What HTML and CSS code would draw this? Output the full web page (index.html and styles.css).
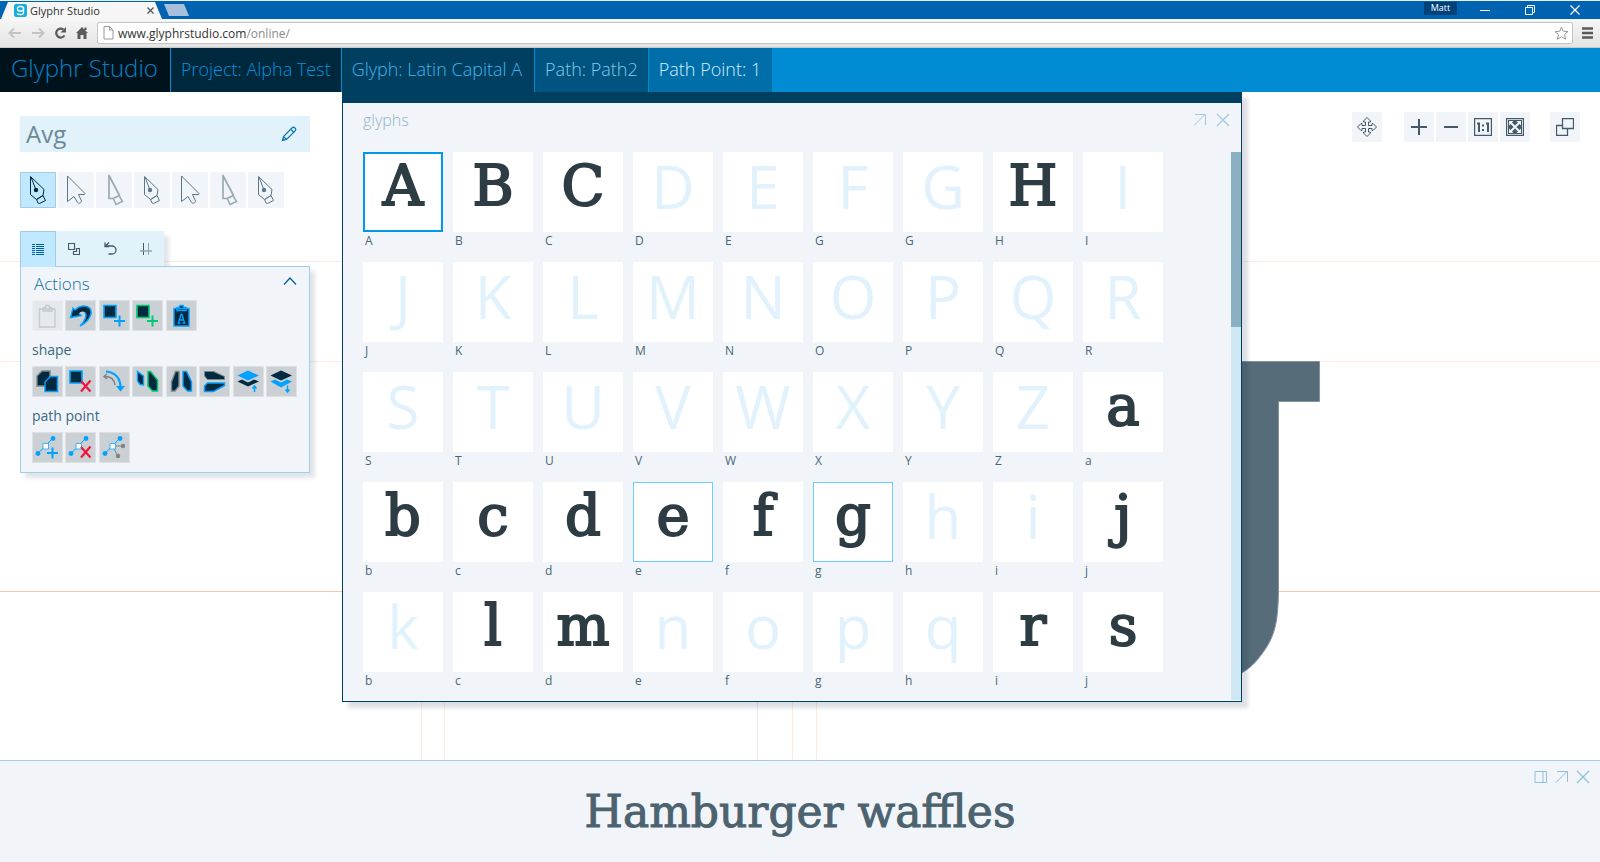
FILE: index.html
```html
<!DOCTYPE html>
<html lang="en">
<head>
<meta charset="utf-8">
<title>Glyphr Studio</title>
<link rel="stylesheet" href="styles.css">
</head>
<body>
<svg class="defs" aria-hidden="true">
  <symbol id="pen" viewBox="0 0 36 36"><path d="M10.500 4.500 24 17.500 23 23.500 16.500 27.500 10.500 22.500Z" fill="none" stroke="currentColor"/><path d="M16.500 27.500 23 23.500 25.500 28.500 19.500 31.500 18 31ZM11 5 16 18" fill="none" stroke="currentColor"/><circle cx="16" cy="18" r="2.200" fill="currentColor"/></symbol>
  <symbol id="arrow" viewBox="0 0 36 36"><path d="M9.500 4 27 21.500 26.500 22.500H20.500L23.500 29C23.500 31 20.500 32 19.500 30.500L16 24.500 9.500 29.500Z" fill="none" stroke="currentColor"/></symbol>
  <symbol id="knife" viewBox="0 0 36 36"><path d="M13 3.500V26.500H17L23.500 23.500Z" fill="none" stroke="currentColor" stroke-width="1.700" stroke-linejoin="round"/><path d="M17.500 27 20 32.500 26.500 29.500 23.500 24.500" fill="none" stroke="currentColor" stroke-width="1.500"/></symbol>
  <symbol id="popout" viewBox="0 0 14 14"><path d="M1 12.500 12 1.500M2 1.500H12.500V12" fill="none" stroke="currentColor"/></symbol>
  <symbol id="close" viewBox="0 0 14 14"><path d="M1 1 13 13M13 1 1 13" fill="none" stroke="currentColor" stroke-width="1.200"/></symbol>
</svg>

<header class="browser">
  <div class="titlebar">
    <div class="browser-tab">
      <svg width="13" height="13" viewBox="0 0 13 13"><rect width="13" height="13" rx="2" fill="#16aedd"/><rect x="3.500" y="2.500" width="6" height="4.500" rx="2" fill="none" stroke="#fff" stroke-width="1.300"/><path d="M9.500 3V9Q9.500 10.500 7.500 10.500H5Q3.500 10.500 3.500 9" fill="none" stroke="#fff" stroke-width="1.300"/></svg>
      <span>Glyphr Studio</span>
      <button class="tab-close" aria-label="Close tab"><svg width="7" height="7" viewBox="0 0 7 7"><path d="M.5.5 6.500 6.500M6.500.5.5 6.500" stroke="#555" stroke-width="1.300"/></svg></button>
    </div>
    <button class="new-tab" aria-label="New tab"></button>
    <div class="window-controls">
      <span class="user">Matt</span>
      <button aria-label="Minimize"><svg width="10" height="10"><path d="M0 5.500H10" stroke="#fff"/></svg></button>
      <button aria-label="Restore"><svg width="10" height="10"><path d="M.5 2.500H7.500V9.500H.5ZM2.500 2.500V.5H9.500V7.500H7.500" fill="none" stroke="#fff"/></svg></button>
      <button aria-label="Close"><svg width="10" height="10"><path d="M.5.5 9.500 9.500M9.500.5.5 9.500" stroke="#fff" stroke-width="1.200"/></svg></button>
    </div>
  </div>
  <div class="toolbar">
    <button class="nav off" aria-label="Back"><svg width="14" height="12"><path d="M1.500 6H13M6 1.500 1.500 6 6 10.500" fill="none" stroke="currentColor" stroke-width="2"/></svg></button>
    <button class="nav off" aria-label="Forward"><svg width="14" height="12"><path d="M1 6H12.500M8 1.500 12.500 6 8 10.500" fill="none" stroke="currentColor" stroke-width="2"/></svg></button>
    <button class="nav" aria-label="Reload"><svg width="13" height="12"><path d="M10.500 8.500A4.500 4.500 0 1 1 9.500 2.500" fill="none" stroke="currentColor" stroke-width="2.200"/><path d="M12 0V5.500H6.500Z" fill="currentColor"/></svg></button>
    <button class="nav" aria-label="Home"><svg width="12" height="12"><path d="M6 0 12 6H10.500V12H7.500V8H4.500V12H1.500V6H0ZM8.500.5H10.500V3H8.500Z" fill="currentColor"/></svg></button>
    <div class="address"><svg width="11" height="14"><path d="M1 .5H6.500L10 4V13H1ZM6.500.5V4H10" fill="#fff" stroke="#999"/></svg><span>www.glyphrstudio.com<i>/online/</i></span>
      <svg class="star" width="15" height="14" viewBox="0 0 15 14"><path d="M7.500 1 9.300 5.200 14 5.600 10.500 8.600 11.600 13.200 7.500 10.800 3.400 13.200 4.500 8.600 1 5.600 5.700 5.200Z" fill="#fff" stroke="#999"/></svg></div>
    <button class="menu" aria-label="Menu"><svg width="11" height="12"><path d="M0 1.500H11M0 6H11M0 10.500H11" stroke="#5a5a5a" stroke-width="2.400"/></svg></button>
  </div>
</header>

<nav class="crumbs">
  <a class="crumb brand" href="#">Glyphr Studio</a>
  <a class="crumb project" href="#">Project: Alpha Test</a>
  <a class="crumb glyph" href="#">Glyph: Latin Capital A</a>
  <a class="crumb path" href="#">Path: Path2</a>
  <a class="crumb point" href="#">Path Point: 1</a>
</nav>

<main class="workspace">
  <svg class="canvas" aria-hidden="true">
    <path d="M0 169.500H4000M0 269.500H4000" stroke="#fdebe3"/>
    <path d="M421.500 0V2000M444.500 0V2000M792.500 0V2000M816.500 0V2000" stroke="#fdeae2"/>
    <path d="M757.500 0V2000" stroke="#f0e2fa"/>
    <path d="M0 499.500H4000" stroke="#f5c5ae"/>
    <path d="M1000 269.500H1319.500V309.500H1278.500V498C1278 535 1274 547 1258 567C1249 578 1240 584 1200 600H1000Z" fill="#566c78" stroke="#8493a2"/>
  </svg>

  <aside class="sidebar">
    <div class="name-field">
      <input type="text" value="Avg" aria-label="Name">
      <svg width="16" height="16" viewBox="0 0 16 16"><path d="M1.500 14.500 2.500 10.500 11 2Q12.500.5 14 2T14 5L5.500 13.500ZM10 3.500 12.500 6M2.500 10.500 5.500 13.500" fill="none" stroke="#1279b0" stroke-width="1.200"/><path d="M1 15 2 12 4 14Z" fill="#1279b0"/></svg>
    </div>
    <div class="tools">
      <button class="tool on" aria-label="Pen"><svg><use href="#pen"/></svg></button>
      <button class="tool" aria-label="Select"><svg><use href="#arrow"/></svg></button>
      <button class="tool gray" aria-label="Knife"><svg><use href="#knife"/></svg></button>
      <button class="tool" aria-label="Add point"><svg><use href="#pen"/></svg></button>
      <button class="tool" aria-label="Move"><svg><use href="#arrow"/></svg></button>
      <button class="tool gray" aria-label="Slice"><svg><use href="#knife"/></svg></button>
      <button class="tool" aria-label="Edit point"><svg><use href="#pen"/></svg></button>
    </div>
    <div class="tabs">
      <button class="tab on" aria-label="Attributes"><svg width="12" height="12"><path d="M0 .5H3M4 .5H12M0 2.500H3M4 2.500H12M0 4.500H3M4 4.500H12M0 6.500H3M4 6.500H12M0 8.500H3M4 8.500H12M0 10.500H3M4 10.500H12" stroke="#00629c"/></svg></button>
      <button class="tab" aria-label="Shapes"><svg width="12" height="12"><path d="M.5.5H6.500V6.500H.5ZM8.500 5.500H11.500V11.500H5.500V8.500H8.500Z" fill="none" stroke="#455a68" stroke-width="1.200"/></svg></button>
      <button class="tab" aria-label="History"><svg width="13" height="13"><path d="M1.500 4H8A4 4 0 0 1 8 12H4.500M1 .5V4.500H5M5 .500 1 4.500" fill="none" stroke="#455a68" stroke-width="1.300"/></svg></button>
      <button class="tab" aria-label="Guides"><svg width="12" height="12"><path d="M3.500 0V12" stroke="#455a68"/><path d="M8.500 0V12" stroke="#8fa3b0"/><path d="M0 8H12" stroke="#8fa3b0" stroke-width="1.500"/></svg></button>
    </div>
    <section class="panel">
      <div class="panel-head"><h2>Actions</h2><button aria-label="Collapse"><svg width="14" height="8"><path d="M1 7.500 7 1 13 7.500" fill="none" stroke="#00629c" stroke-width="1.300"/></svg></button></div>
      <div class="actions">
        <button class="act off" aria-label="Paste"><svg><path d="M7.500 9H23V27H7.500ZM11 11V8L13.500 7.500 14 5.500H17L17.500 7.500 20 8V11Z" fill="none" stroke="#c3c9cd" stroke-width="1.300"/></svg></button>
        <button class="act" aria-label="Undo"><svg><path d="M5.500 17.500 8 8 10 10C15 5 22 5 25 8.500C28.500 14 23 22 15 26C21 20 22 15 20 12.500C18 10.500 15 12 14 13.500L16 15.500Z" fill="#002a40"/><path d="M15 26C23 22 28.500 14 25 8.500C22 5 15 5 10 10L8 8 5.500 17.500 16 15.500 14 13.500M15 26C21 20 22 15 20 12.500" fill="none" stroke="#00a2ff" stroke-width="1.400"/></svg></button>
        <button class="act" aria-label="Add shape"><svg><path d="M5 5.500H17V17.500H5Z" fill="#002a40" stroke="#00a2ff" stroke-width="1.600"/><path d="M20.500 15.500V26.500M15 21H26" stroke="#00a2ff" stroke-width="2"/></svg></button>
        <button class="act" aria-label="Add component"><svg><path d="M5 5.500H17V17.500H5Z" fill="#002a40" stroke="#00c96f" stroke-width="1.600"/><path d="M20.500 15.500V26.500M15 21H26" stroke="#00c96f" stroke-width="2"/></svg></button>
        <button class="act" aria-label="Paste glyph"><svg><path d="M8 8.500H23V26H8ZM11 10.500V7.500L13.500 7 14 5.500H17L17.500 7 20 7.500V10.500Z" fill="#002a40" stroke="#00a2ff" stroke-width="1.400"/><path d="M11.500 23H14.500M16.500 23H19.500M12.500 23 15 14.500H16L18.500 23M14 20H17" fill="none" stroke="#00a2ff" stroke-width="1.300"/></svg></button>
      </div>
      <h3>shape</h3>
      <div class="actions">
        <button class="act" aria-label="Combine"><svg><path d="M5 20V10L10 5H18V20Z" fill="#002a40" stroke="#7d8589" stroke-width="1.400"/><path d="M13 25.500V16L18.500 10.500H25.500V25.500Z" fill="#002a40" stroke="#00a2ff" stroke-width="1.400"/></svg></button>
        <button class="act" aria-label="Delete shape"><svg><path d="M5 5H17V17H5Z" fill="#002a40" stroke="#00a2ff" stroke-width="1.600"/><path d="M16 15 25.500 25.500M25.500 14.500 16 25.500" stroke="#f0153c" stroke-width="2.200"/></svg></button>
        <button class="act" aria-label="Reverse path"><svg><path d="M7 5.500Q21 7 21.500 21" fill="none" stroke="#00a2ff" stroke-width="2.200"/><path d="M17 20H26L21.500 25.500Z" fill="#00a2ff"/><path d="M16 19Q15 10.500 6 10.500M8 8 5 10.500 8 13" fill="none" stroke="#7d8589" stroke-width="1.500"/></svg></button>
        <button class="act" aria-label="Copy flip"><svg><path d="M5.500 5.500 11.500 10V19L8 18.500 5.500 15Z" fill="#002a40" stroke="#00a2ff" stroke-width="1.400"/><path d="M16 5.500H18.500L25.500 14V25H20.500L16 20Z" fill="#002a40" stroke="#00c96f" stroke-width="1.500"/></svg></button>
        <button class="act" aria-label="Flip horizontal"><svg><path d="M13 5.500H9.500L5.500 16V25H9L13 20Z" fill="#002a40" stroke="#7d8589" stroke-width="1.400"/><path d="M17 5.500H20.500L25.500 16V25H21.500L17 20Z" fill="#002a40" stroke="#00a2ff" stroke-width="1.400"/></svg></button>
        <button class="act" aria-label="Flip vertical"><svg><path d="M5.500 5.500H14.500L25.500 10.500V13.500H8.500L5.500 10Z" fill="#002a40" stroke="#7d8589"/><path d="M5.500 20 8.500 17H25.500V19.500L14.500 25.500H5.500Z" fill="#002a40" stroke="#00a2ff" stroke-width="1.500"/></svg></button>
        <button class="act" aria-label="Move up"><svg><path d="M4.500 9.500 15 4.500 26 9.500 15 14.500Z" fill="#00a2ff"/><path d="M4.500 15.500 9 13.500 15 16.500 21 13.500 26 15.500 15 20.500Z" fill="#002a40"/><path d="M21.500 26V20.500M19.500 22.500 21.500 20 23.500 22.500" fill="none" stroke="#00a2ff" stroke-width="1.500"/></svg></button>
        <button class="act" aria-label="Move down"><svg><path d="M4.500 9.500 15 4.500 26 9.500 15 14.500Z" fill="#002a40"/><path d="M4.500 15.500 9 13.500 15 16.500 21 13.500 26 15.500 15 21.500Z" fill="#00a2ff"/><path d="M21.500 19.500V25.500M19.500 23.500 21.500 26 23.500 23.500" fill="none" stroke="#00a2ff" stroke-width="1.500"/></svg></button>
      </div>
      <h3>path point</h3>
      <div class="actions">
        <button class="act" aria-label="Insert point"><svg><path d="M6 21.500 20.500 6.500" stroke="#00a2ff"/><circle cx="6" cy="21.500" r="2.400" fill="#00a2ff"/><circle cx="21" cy="6.500" r="2.400" fill="#00a2ff"/><path d="M11 11.500H16.500V17H11Z" fill="#fff" stroke="#39b4ff"/><path d="M20.500 15.500V26.500M15 21H26" stroke="#00a2ff" stroke-width="2"/></svg></button>
        <button class="act" aria-label="Delete point"><svg><path d="M6 21.500 20.500 6.500" stroke="#00a2ff"/><circle cx="6" cy="21.500" r="2.400" fill="#00a2ff"/><circle cx="21" cy="6.500" r="2.400" fill="#00a2ff"/><path d="M11 11.500H16.500V17H11Z" fill="#fff" stroke="#39b4ff"/><path d="M16 15 25.500 25.500M25.500 14.500 16 25.500" stroke="#f0153c" stroke-width="2.200"/></svg></button>
        <button class="act" aria-label="Reset handles"><svg><path d="M24 14H14L18.500 24" fill="none" stroke="#7d8589"/><circle cx="24" cy="14" r="2.200" fill="#7d8589"/><circle cx="19" cy="24" r="2.200" fill="#7d8589"/><path d="M6 21.500 20.500 6.500" stroke="#00a2ff"/><circle cx="6" cy="21.500" r="2.400" fill="#00a2ff"/><circle cx="21" cy="6.500" r="2.400" fill="#00a2ff"/><path d="M11 11.500H16.500V17H11Z" fill="#fff" stroke="#39b4ff"/></svg></button>
      </div>
    </section>
  </aside>

  <section class="chooser">
    <div class="chooser-head">
      <h2>glyphs</h2>
      <button aria-label="Pop out"><svg width="14" height="14"><use href="#popout"/></svg></button>
      <button aria-label="Close"><svg width="14" height="14"><use href="#close"/></svg></button>
    </div>
    <div class="chooser-body">
      <div class="glyph-grid">
        <button class="cell selected"><b>A</b><span>A</span></button>
        <button class="cell"><b>B</b><span>B</span></button>
        <button class="cell"><b>C</b><span>C</span></button>
        <button class="cell empty"><b>D</b><span>D</span></button>
        <button class="cell empty"><b>E</b><span>E</span></button>
        <button class="cell empty"><b>F</b><span>G</span></button>
        <button class="cell empty"><b>G</b><span>G</span></button>
        <button class="cell"><b>H</b><span>H</span></button>
        <button class="cell empty"><b>I</b><span>I</span></button>
        <button class="cell empty"><b>J</b><span>J</span></button>
        <button class="cell empty"><b>K</b><span>K</span></button>
        <button class="cell empty"><b>L</b><span>L</span></button>
        <button class="cell empty"><b>M</b><span>M</span></button>
        <button class="cell empty"><b>N</b><span>N</span></button>
        <button class="cell empty"><b>O</b><span>O</span></button>
        <button class="cell empty"><b>P</b><span>P</span></button>
        <button class="cell empty"><b>Q</b><span>Q</span></button>
        <button class="cell empty"><b>R</b><span>R</span></button>
        <button class="cell empty"><b>S</b><span>S</span></button>
        <button class="cell empty"><b>T</b><span>T</span></button>
        <button class="cell empty"><b>U</b><span>U</span></button>
        <button class="cell empty"><b>V</b><span>V</span></button>
        <button class="cell empty"><b>W</b><span>W</span></button>
        <button class="cell empty"><b>X</b><span>X</span></button>
        <button class="cell empty"><b>Y</b><span>Y</span></button>
        <button class="cell empty"><b>Z</b><span>Z</span></button>
        <button class="cell"><b>a</b><span>a</span></button>
        <button class="cell"><b>b</b><span>b</span></button>
        <button class="cell"><b>c</b><span>c</span></button>
        <button class="cell"><b>d</b><span>d</span></button>
        <button class="cell linked"><b>e</b><span>e</span></button>
        <button class="cell"><b>f</b><span>f</span></button>
        <button class="cell linked"><b>g</b><span>g</span></button>
        <button class="cell empty"><b>h</b><span>h</span></button>
        <button class="cell empty"><b>i</b><span>i</span></button>
        <button class="cell"><b>j</b><span>j</span></button>
        <button class="cell empty"><b>k</b><span>b</span></button>
        <button class="cell"><b>l</b><span>c</span></button>
        <button class="cell"><b>m</b><span>d</span></button>
        <button class="cell empty"><b>n</b><span>e</span></button>
        <button class="cell empty"><b>o</b><span>f</span></button>
        <button class="cell empty"><b>p</b><span>g</span></button>
        <button class="cell empty"><b>q</b><span>h</span></button>
        <button class="cell"><b>r</b><span>i</span></button>
        <button class="cell"><b>s</b><span>j</span></button>
      </div>
      <div class="track"><div class="thumb"></div></div>
    </div>
  </section>

  <div class="view-tools">
    <button class="view pan" aria-label="Pan"><svg width="20" height="20"><path d="M10 .5 13.500 4V5H11.500V8.500H15V6.500H16L19.500 10 16 13.500H15V11.500H11.500V15H13.500V16L10 19.500 6.500 16V15H8.500V11.500H5V13.500H4L.5 10 4 6.500H5V8.500H8.500V5H6.500V4Z" fill="none" stroke="currentColor"/></svg></button>
    <button class="view" aria-label="Zoom in"><svg width="16" height="16"><path d="M8 0V16M0 8H16" stroke="currentColor" stroke-width="2"/></svg></button>
    <button class="view" aria-label="Zoom out"><svg width="16" height="16"><path d="M1 8H15" stroke="currentColor" stroke-width="2"/></svg></button>
    <button class="view" aria-label="Actual size"><svg width="18" height="18"><path d="M.5.500H17.500V17.500H.5Z" fill="none" stroke="currentColor" stroke-width="1.400"/><path d="M5 14V4.500M3 5.500H5M14 14V4.500M12 5.500H14M9 6.500V8.500M9 11V13" stroke="currentColor" stroke-width="2"/></svg></button>
    <button class="view" aria-label="Fit"><svg width="18" height="18"><path d="M.5.500H17.500V17.500H.5Z" fill="none" stroke="currentColor" stroke-width="1.400"/><path d="M2 2H16V16H2Z" fill="currentColor"/><path d="M4.500 4.500 13.500 13.500M13.500 4.500 4.500 13.500" stroke="#f1f5f9" stroke-width="2"/><path d="M3 3H7.500L3 7.500ZM15 3V7.500L10.500 3ZM3 15V10.500L7.500 15ZM15 15H10.500L15 10.500Z" fill="#f1f5f9"/></svg></button>
    <button class="view layers" aria-label="Layers"><svg width="18" height="18"><path d="M6.500.500H17.500V10.500H6.500Z M6.500 7.500H.5V17.500H11.500V10.500" fill="none" stroke="currentColor" stroke-width="1.300"/></svg></button>
  </div>
</main>

<footer class="preview">
  <p>Hamburger waffles</p>
  <div class="preview-tools">
    <button aria-label="Dock"><svg width="14" height="14"><path d="M1 1.500H12.500V12.500H1ZM9 1.500V12.500" fill="none" stroke="currentColor"/></svg></button>
    <button aria-label="Pop out"><svg width="14" height="14"><use href="#popout"/></svg></button>
    <button aria-label="Close"><svg width="14" height="14"><use href="#close"/></svg></button>
  </div>
</footer>
</body>
</html>
```

FILE: styles.css
```css
* { box-sizing: border-box; }

body {
  margin: 0;
  min-height: 100vh;
  display: flex;
  flex-direction: column;
  font-family: "Open Sans", "Noto Sans", sans-serif;
  background: #fff;
}

button {
  margin: 0;
  padding: 0;
  border: 0;
  background: none;
  color: inherit;
  font: inherit;
}

svg { display: block; }
h2, h3, p { margin: 0; font-weight: 300; }
.defs { position: absolute; width: 0; height: 0; }

/* Browser frame */
.browser { background: #0063b1; padding-top: 1px; border-top: 1px solid #e8eef4; }
.titlebar { display: flex; align-items: stretch; height: 17px; }
.browser-tab {
  display: flex;
  align-items: center;
  gap: 3px;
  width: 162px;
  padding: 0 8px 0 14px;
  background: #f6f6f6;
  clip-path: polygon(8px 0, 155px 0, 100% 100%, 1px 100%);
  font-size: 11px;
  color: #333;
}
.tab-close { margin: 0 0 0 auto; }
.browser-tab span { flex: 1; }
.new-tab {
  width: 25px;
  height: 12px;
  margin: 2px 0 0 2px;
  background: #a7bfdb;
  clip-path: polygon(0 0, 20px 0, 100% 100%, 5px 100%);
}
.window-controls { display: flex; align-items: flex-start; margin-left: auto; padding-right: 20px; }
.window-controls button { padding-top: 3px; margin-left: 35px; }
.window-controls .user + button { margin-left: 23px; }
.user {
  width: 33px;
  height: 13px;
  background: #00417a;
  color: #fff;
  font-size: 9px;
  line-height: 12px;
  text-align: center;
}
.toolbar {
  display: flex;
  align-items: center;
  gap: 9px;
  height: 29px;
  padding: 0 7px 0 8px;
  background: linear-gradient(#f6f6f6, #e4e4e4);
  border-bottom: 1px solid #c8c8c8;
}
.nav { color: #5a5a5a; }
.nav.off { color: #c4c4c4; }
.address {
  flex: 1;
  display: flex;
  align-items: center;
  gap: 4px;
  height: 22px;
  padding: 0 3px 0 5px;
  border: 1px solid #c4c4c4;
  border-radius: 2px;
  background: #fff;
  font-size: 12px;
  color: #333;
}
.address i { font-style: normal; color: #8a8a8a; }
.star { margin-left: auto; }

/* Navigation */
.crumbs { display: flex; height: 44px; background: #008bd3; }
.crumb {
  padding: 0 10px;
  margin-right: 1px;
  font-size: 18px;
  font-weight: 300;
  line-height: 43px;
  text-decoration: none;
  white-space: nowrap;
}
.brand { padding: 0 12px 0 11px; font-size: 24px; line-height: 40px; background: #00131c; color: #0082c8; }
.project { background: #00283d; color: #0093de; }
.glyph { padding-right: 12px; background: #003f60; color: #41b5f0; }
.path { background: #00547f; color: #86c8ee; }
.point { margin: 0; padding-right: 11px; background: #006ea9; color: #d5eefc; }

/* Workspace */
.workspace { position: relative; flex: 1; display: flex; align-items: flex-start; }
.canvas { position: absolute; inset: 0; width: 100%; height: 100%; }
.sidebar { position: relative; flex: none; width: 342px; padding: 24px 32px 0 20px; }
.name-field {
  display: flex;
  align-items: center;
  height: 36px;
  padding: 0 13px 0 6px;
  background: #e1f2fb;
}
.name-field input {
  flex: 1;
  min-width: 0;
  padding: 0;
  border: 0;
  outline: 0;
  background: none;
  color: #6c8997;
  font: 400 24px/36px "Open Sans", "Noto Sans", sans-serif;
}
.tools { display: flex; gap: 2px; margin-top: 20px; }
.tool { width: 36px; height: 36px; background: #f1f5f9; color: #5b788a; }
.tool svg { width: 36px; height: 36px; }
.tool.gray { color: #9aaab3; }
.tool.on { background: #c0e8fe; color: #00283d; box-shadow: inset 0 0 0 1px #a3cde0; }
.tabs {
  display: flex;
  width: 144px;
  height: 35px;
  margin-top: 23px;
  background: #e1f2fb;
  box-shadow: 5px 5px 4px #0025401f;
}
.tab { display: grid; place-items: center; width: 36px; }
.tab.on { position: relative; height: 36px; background: #c0e8fe; border: 1px solid #a3cde0; border-bottom: 0; z-index: 1; }
.panel {
  position: relative;
  padding: 0 12px 9px 11px;
  border: 1px solid #a3cde0;
  background: #f1f5f9;
  box-shadow: 5px 5px 4px #0025401f;
}
.panel-head { display: flex; justify-content: space-between; align-items: flex-start; height: 33px; padding-left: 2px; }
.panel h2 { font-size: 17px; line-height: 34px; color: #1271a3; }
.panel-head button { padding: 10px 0 0; }
.panel h3 { padding-top: 3px; font-size: 14px; line-height: 32px; font-weight: 400; color: #3c6880; }
.actions { display: grid; grid-template-columns: repeat(8, 31px); justify-content: space-between; }
.act { width: 31px; height: 31px; background: #cbd0d4; border: 1px solid #dde1e4; }
.act svg { width: 31px; height: 31px; margin: -1px; }
.act.off { background: #e5e9ec; border-color: #eceff2; }

/* Glyph chooser */
.chooser {
  position: relative;
  flex: 1;
  min-width: 0;
  border: 1px solid #003f60;
  border-top-width: 11px;
  background: #f1f5f9;
  box-shadow: 6px 6px 4px #00254024;
}
.chooser-head {
  display: flex;
  align-items: center;
  gap: 9px;
  height: 49px;
  padding: 0 11px 16px 20px;
  color: #9dcae0;
}
.chooser-head h2 { margin-right: auto; font-size: 16px; line-height: 32px; color: #8fb5c9; }
.chooser-body { display: flex; justify-content: space-between; padding-bottom: 1px; }
.glyph-grid {
  display: grid;
  grid-template-columns: repeat(9, 80px);
  gap: 10px;
  padding: 0 0 8px 20px;
}
.cell { display: block; text-align: left; color: #4b6675; }
.cell b {
  display: block;
  height: 80px;
  background: #fff;
  color: #2e3c44;
  text-align: center;
  font: 400 56px/67px "DejaVu Serif", serif;
  -webkit-text-stroke: 2px #2e3c44;
}
.cell span { display: block; height: 20px; padding-left: 2px; font-size: 12px; line-height: 18px; }
.cell.empty b {
  color: #e1f2fc;
  font: 400 60px/68px "Open Sans", "Noto Sans", sans-serif;
  -webkit-text-stroke: 0;
}
.selected b { box-shadow: inset 0 0 0 2px #0099e5; }
.linked b { box-shadow: inset 0 0 0 1px #70ccfb; }
.track { width: 10px; background: #cfe7f3; }
.thumb { height: 32%; background: #8bb0c4; }

/* View tools */
.view-tools {
  position: relative;
  flex: none;
  width: 358px;
  display: flex;
  justify-content: flex-end;
  gap: 2px;
  padding: 20px 20px 0 0;
}
.view { display: grid; place-items: center; width: 30px; height: 30px; background: #f1f5f9; color: #455a68; }
.pan { margin-right: 20px; }
.layers { margin-left: 18px; }

/* Preview */
.preview {
  position: relative;
  height: 102px;
  border-top: 1px solid #9fcbe0;
  background: #f1f5f9;
}
.preview p {
  text-align: center;
  color: #4c626f;
  font: 400 44px/102px "DejaVu Serif", serif;
  -webkit-text-stroke: 1px #4c626f;
}
.preview-tools { position: absolute; top: 9px; right: 10px; display: flex; gap: 7px; color: #8fc0dc; }
```
